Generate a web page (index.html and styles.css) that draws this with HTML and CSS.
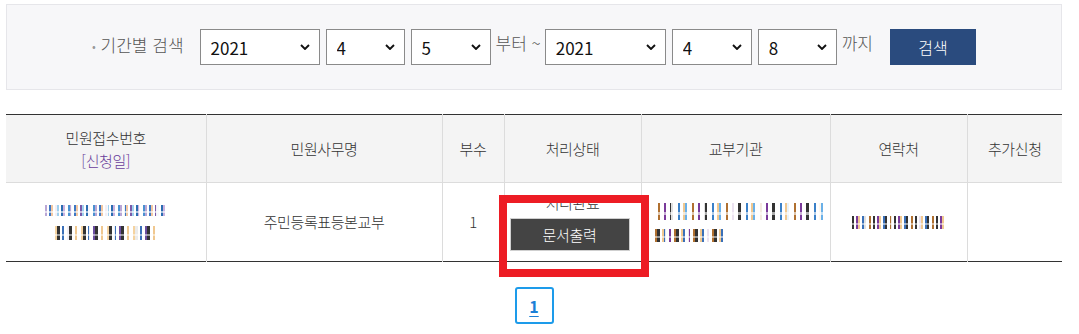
FILE: index.html
```html
<!DOCTYPE html>
<html lang="ko">
<head>
<meta charset="utf-8">
<title>민원 신청 내역</title>
<link rel="stylesheet" href="styles.css">
</head>
<body>
<div class="page">
  <div class="search-box">
    <span class="search-label"><span class="bullet">•</span> 기간별 검색</span>
    <span class="sel w120"><select><option>2021</option></select><svg class="chev" viewBox="0 0 10 6"><path d="M1 1l4 4 4-4" fill="none" stroke="#111" stroke-width="1.9"/></svg></span>
    <span class="sel w79"><select><option>4</option></select><svg class="chev" viewBox="0 0 10 6"><path d="M1 1l4 4 4-4" fill="none" stroke="#111" stroke-width="1.9"/></svg></span>
    <span class="sel w80"><select><option>5</option></select><svg class="chev" viewBox="0 0 10 6"><path d="M1 1l4 4 4-4" fill="none" stroke="#111" stroke-width="1.9"/></svg></span>
    <span class="word">부터 ~</span>
    <span class="sel w121"><select><option>2021</option></select><svg class="chev" viewBox="0 0 10 6"><path d="M1 1l4 4 4-4" fill="none" stroke="#111" stroke-width="1.9"/></svg></span>
    <span class="sel w80"><select><option>4</option></select><svg class="chev" viewBox="0 0 10 6"><path d="M1 1l4 4 4-4" fill="none" stroke="#111" stroke-width="1.9"/></svg></span>
    <span class="sel w79"><select><option>8</option></select><svg class="chev" viewBox="0 0 10 6"><path d="M1 1l4 4 4-4" fill="none" stroke="#111" stroke-width="1.9"/></svg></span>
    <span class="word">까지</span>
    <button class="btn-search" type="button">검색</button>
  </div>

  <table class="list">
    <colgroup>
      <col class="c1"><col class="c2"><col class="c3"><col class="c4"><col class="c5"><col class="c6"><col class="c7">
    </colgroup>
    <thead>
      <tr>
        <th>민원접수번호<br><span class="date-label">[신청일]</span></th>
        <th>민원사무명</th>
        <th>부수</th>
        <th>처리상태</th>
        <th>교부기관</th>
        <th>연락처</th>
        <th>추가신청</th>
      </tr>
    </thead>
    <tbody>
      <tr>
        <td>
          <span class="mosaic m-a"></span>
          <span class="mosaic m-b"></span>
        </td>
        <td>주민등록표등본교부</td>
        <td>1</td>
        <td>
          <div class="status">처리완료</div>
          <button class="btn-print" type="button">문서출력</button>
        </td>
        <td class="left">
          <span class="mosaic m-c"></span>
          <span class="mosaic m-d"></span>
        </td>
        <td><span class="mosaic m-e"></span></td>
        <td></td>
      </tr>
    </tbody>
  </table>

  <div class="pager"><a class="page-num" href="#">1</a></div>

  <div class="highlight"></div>
</div>
</body>
</html>
```

FILE: styles.css
```css
html, body {
  margin: 0;
  padding: 0;
  background: #fff;
}
body {
  font-family: "Noto Sans CJK KR", "Noto Sans", sans-serif;
  color: #333;
}
.page {
  position: relative;
  width: 1056px;
  padding: 4px 17px 0 6px;
}
.search-box {
  height: 84px;
  border: 1px solid #e6e6ea;
  background: #f7f7f9;
  display: flex;
  align-items: center;
  justify-content: center;
  padding-left: 0;
}
.search-label {
  font-size: 17px;
  line-height: 20px;
  color: #555;
  font-weight: 300;
  margin-right: 16px;
  margin-top: -2px;
}
.bullet {
  color: #999;
  font-size: 12px;
  position: relative;
  top: -1px;
}
.sel {
  position: relative;
  display: inline-block;
  height: 36px;
  margin-right: 6px;
}
.sel select {
  appearance: none;
  -webkit-appearance: none;
  width: 100%;
  height: 36px;
  border: 1px solid #8a8a8a;
  border-radius: 0;
  background: #fff;
  font-family: "Noto Sans CJK KR", "Noto Sans", sans-serif;
  font-size: 17px;
  color: #111;
  padding: 0 0 0 10px;
  margin: 0;
  outline: none;
}
.chev {
  position: absolute;
  right: 10px;
  top: 15px;
  width: 10px;
  height: 6px;
  pointer-events: none;
}
.w120 { width: 120px; }
.w121 { width: 121px; }
.w80 { width: 80px; }
.w79 { width: 79px; }
.word {
  font-size: 17px;
  line-height: 20px;
  color: #555;
  font-weight: 300;
  margin: -8px 4px 0 -1px;
}
.btn-search {
  margin-left: 13px;
  width: 86px;
  height: 36px;
  border: 0;
  background: #2a4b7e;
  color: #fff;
  font-family: "Noto Sans CJK KR", "Noto Sans", sans-serif;
  font-size: 16px;
  font-weight: 300;
  padding: 0;
}

.list {
  margin-top: 24px;
  width: 1056px;
  border-collapse: collapse;
  table-layout: fixed;
  border-top: 1px solid #333;
  border-bottom: 1px solid #333;
}
.c1 { width: 200px; }
.c2 { width: 236px; }
.c3 { width: 62px; }
.c4 { width: 137px; }
.c5 { width: 189px; }
.c6 { width: 137px; }
.c7 { width: 95px; }
.list th {
  background: #f4f4f4;
  font-weight: 300;
  font-size: 15px;
  letter-spacing: -0.4px;
  line-height: 23px;
  color: #333;
  height: 67px;
  padding: 0;
  border-left: 1px solid #dcdcdc;
  border-bottom: 1px solid #dcdcdc;
  text-align: center;
  vertical-align: middle;
}
.list th:first-child, .list td:first-child { border-left: 0; }
.date-label { color: #6a3d9a; }
.list td {
  height: 78px;
  padding: 0;
  border-left: 1px solid #dcdcdc;
  font-size: 15px;
  font-weight: 300;
  letter-spacing: -0.4px;
  line-height: 20px;
  color: #333;
  text-align: center;
  vertical-align: middle;
}
.list td.left {
  text-align: left;
  padding-left: 13px;
}
.status {
  font-size: 15px;
  line-height: 20px;
  margin-top: 0;
  color: #333;
}
.btn-print {
  display: block;
  margin: 5px auto 0 5px;
  width: 120px;
  height: 33px;
  background: #444;
  border: 1px solid #cfcfcf;
  color: #fff;
  font-family: "Noto Sans CJK KR", "Noto Sans", sans-serif;
  font-size: 15px;
  font-weight: 300;
  letter-spacing: -0.3px;
  padding: 0;
}

.mosaic {
  display: block;
  background-color: #fff;
}
.m-a {
  width: 122px;
  height: 11px;
  margin: 0 auto 10px;
  background-image:
    repeating-linear-gradient(90deg, rgba(255,255,255,0) 0 9px, rgba(255,255,255,0.9) 9px 12px, rgba(255,255,255,0) 12px 17px),
    repeating-linear-gradient(0deg, rgba(255,255,255,0) 0 3px, rgba(255,255,255,0.6) 3px 5px, rgba(255,255,255,0) 5px 8px),
    repeating-linear-gradient(90deg, #b9a6d6 0 2px, #fff 2px 4px, #3d77c4 4px 6px, #f3c7a0 6px 8px, #fff 8px 10px, #7a5aa8 10px 12px, #9fd0ee 12px 14px, #fff 14px 16px, #2b6cb0 16px 18px, #c9b2e0 18px 20px, #fff 20px 23px, #4a90d0 23px 25px);
}
.m-b {
  width: 101px;
  height: 14px;
  margin: 0 auto;
  background-image:
    repeating-linear-gradient(90deg, rgba(255,255,255,0) 0 11px, rgba(255,255,255,0.9) 11px 14px, rgba(255,255,255,0) 14px 23px),
    repeating-linear-gradient(0deg, rgba(255,255,255,0) 0 4px, rgba(255,255,255,0.5) 4px 6px, rgba(255,255,255,0) 6px 10px),
    repeating-linear-gradient(90deg, #f5d3a0 0 2px, #333 2px 5px, #fff 5px 7px, #3a6fb8 7px 9px, #fff 9px 12px, #6b4ea0 12px 14px, #333 14px 17px, #fff 17px 20px, #f0c890 20px 22px, #fff 22px 26px);
}
.m-c {
  width: 165px;
  height: 17px;
  margin: 0 0 9px 3px;
  background-image:
    repeating-linear-gradient(90deg, rgba(255,255,255,0) 0 13px, rgba(255,255,255,0.85) 13px 18px, rgba(255,255,255,0) 18px 29px),
    repeating-linear-gradient(0deg, rgba(255,255,255,0) 0 5px, rgba(255,255,255,0.6) 5px 8px, rgba(255,255,255,0) 8px 12px),
    repeating-linear-gradient(90deg, #b07030 0 2px, #fff 2px 6px, #7a3a9a 6px 8px, #fff 8px 12px, #333 12px 15px, #fff 15px 20px, #3a80c8 20px 22px, #fff 22px 25px, #f0c890 25px 27px, #6ab0e8 27px 29px, #fff 29px 34px);
}
.m-d {
  width: 71px;
  height: 13px;
  margin: 0;
  background-image:
    repeating-linear-gradient(90deg, rgba(255,255,255,0) 0 10px, rgba(255,255,255,0.85) 10px 13px, rgba(255,255,255,0) 13px 21px),
    repeating-linear-gradient(0deg, rgba(255,255,255,0) 0 4px, rgba(255,255,255,0.5) 4px 6px, rgba(255,255,255,0) 6px 10px),
    repeating-linear-gradient(90deg, #b07030 0 2px, #333 2px 5px, #fff 5px 7px, #f0c890 7px 9px, #3a70b8 9px 11px, #fff 11px 14px, #7a3a9a 14px 16px, #fff 16px 19px);
}
.m-e {
  width: 93px;
  height: 13px;
  margin: 0 auto;
  background-image:
    repeating-linear-gradient(90deg, rgba(255,255,255,0) 0 12px, rgba(255,255,255,0.85) 12px 15px, rgba(255,255,255,0) 15px 27px),
    repeating-linear-gradient(0deg, rgba(255,255,255,0) 0 4px, rgba(255,255,255,0.5) 4px 6px, rgba(255,255,255,0) 6px 10px),
    repeating-linear-gradient(90deg, #333 0 2px, #fff 2px 4px, #7a3a9a 4px 6px, #f0c890 6px 8px, #fff 8px 10px, #3a70b8 10px 12px, #333 12px 14px, #fff 14px 17px, #b07030 17px 19px, #fff 19px 21px);
}

.pager {
  display: flex;
  justify-content: center;
  margin-top: 25px;
}
.page-num {
  display: flex;
  align-items: center;
  justify-content: center;
  box-sizing: border-box;
  width: 39px;
  height: 37px;
  border: 2px solid #1d9bea;
  border-radius: 3px;
  color: #1b7fd6;
  font-size: 16px;
  font-weight: bold;
  text-decoration: underline;
  text-underline-offset: 3px;
}

.highlight {
  position: absolute;
  left: 499px;
  top: 195px;
  width: 134px;
  height: 66px;
  border: 8px solid #ed1c24;
}
```
